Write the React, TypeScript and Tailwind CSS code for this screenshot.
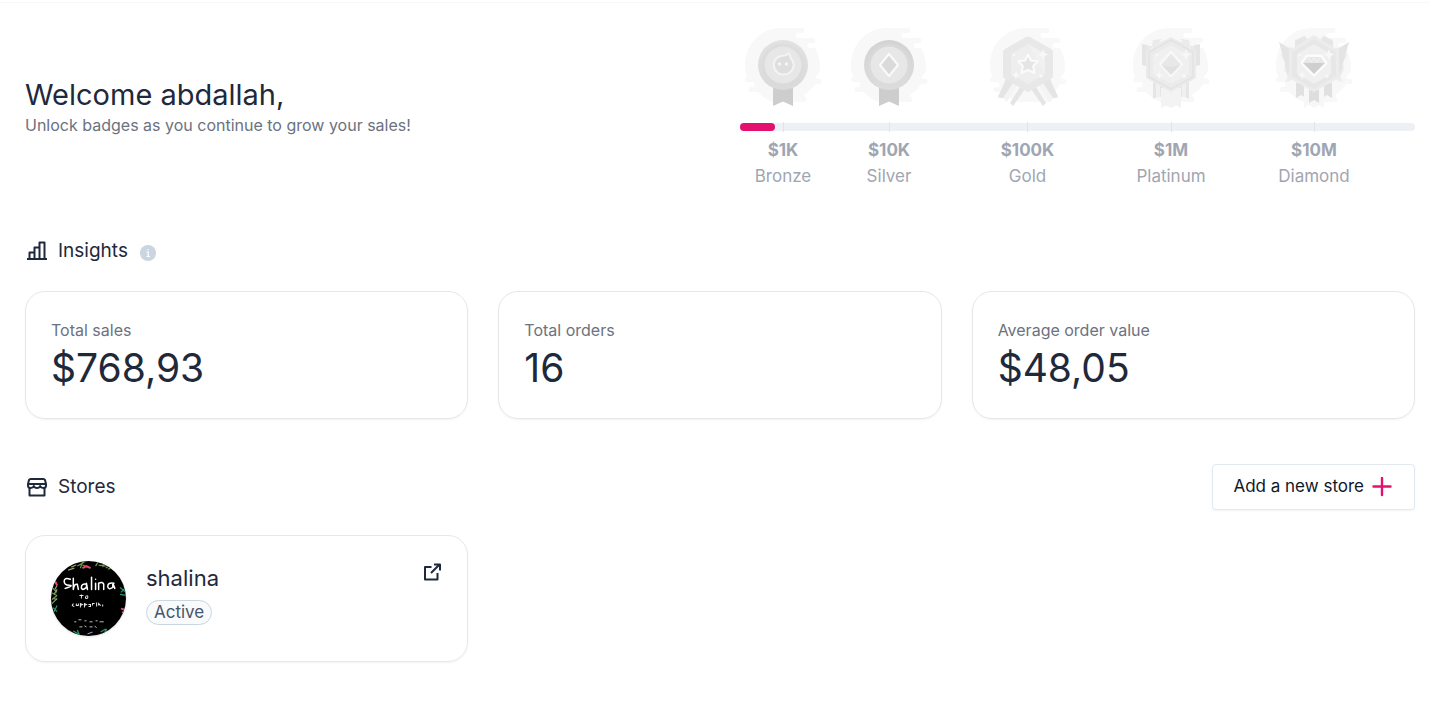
import type { ReactNode } from "react";

const levels = [
  { amount: "$1K", name: "Bronze" },
  { amount: "$10K", name: "Silver" },
  { amount: "$100K", name: "Gold" },
  { amount: "$1M", name: "Platinum" },
  { amount: "$10M", name: "Diamond" },
];

const stats = [
  { label: "Total sales", value: "$768,93" },
  { label: "Total orders", value: "16" },
  { label: "Average order value", value: "$48,05" },
];

const progress = 35 / 675;

// icons, bar ticks and labels share the same columns
const levelGrid = "grid grid-cols-[86fr_126fr_151fr_136fr_150fr_26fr]";

function BadgeFrame({ children }: { children: ReactNode }) {
  return (
    <svg viewBox="0 0 80 84" className="w-20 h-[84px]" aria-hidden="true">
      <path
        fill="#f8f8f8"
        d="M38 2H59a2.5 2.5 0 0 1 0 5H55a2.5 2.5 0 0 0 0 5H70a2.5 2.5 0 0 1 0 5H67a2.5 2.5 0 0 0 0 5H72Q77 31 77 42Q77 47 74 49a2.5 2.5 0 0 0 0 4H76a2.5 2.5 0 0 1 0 5H72Q69 64 62 68a2 2 0 0 0 0 3H61a2.5 2.5 0 0 1 0 5H30Q21 73 15 66H8a2.5 2.5 0 0 1 0-5H9a2.5 2.5 0 0 0 0-5H4.500a2.5 2.5 0 0 1 0-5Q2 47 2 39C2 18 18 2 38 2Z"
      />
      {children}
    </svg>
  );
}

function Sparkles() {
  return (
    <g fill="#f8f8f8">
      <path d="M55 23l1.5 4 4 1.5-4 1.5L55 34l-1.5-4-4-1.5 4-1.5Z" />
      <path d="M28 45l1.2 3 3 1.2-3 1.2L28 54l-1.2-3.4-3-1.2 3-1.2Z" />
      <circle cx="53" cy="50" r="1.8" />
      <circle cx="26" cy="29" r="1.2" />
    </g>
  );
}

function RoundMedal({ id, from, to }: { id: string; from: string; to: string }) {
  return (
    <>
      <defs>
        <linearGradient id={id} x1="0" y1="0" x2="0" y2="1">
          <stop offset="0" stopColor={from} />
          <stop offset="1" stopColor={to} />
        </linearGradient>
      </defs>
      <path d="M30 58H50V80L40 75.5L30 80Z" fill="#cdcdcd" />
      <circle cx="40" cy="39" r="25" fill={`url(#${id})`} />
      <circle cx="40" cy="39" r="21.500" fill={to} opacity=".5" />
      <circle cx="40" cy="39" r="18.5" fill="#e7e7e7" />
    </>
  );
}

function BronzeBadge() {
  return (
    <BadgeFrame>
      <RoundMedal id="bronze" from="#e2e2e2" to="#dadada" />
      <path
        d="M45.5 27c-1.8 3-4.5 2.8-8 3a10 9.500 0 1 0 10.500 2.500c-1-1.500-.5-3.500-2.500-5.500Z"
        fill="#dedede"
        stroke="#f3f3f3"
        strokeWidth="2"
        strokeLinejoin="round"
      />
      <circle cx="36.5" cy="38" r="1.7" fill="#f5f5f5" />
      <circle cx="43.5" cy="38" r="1.7" fill="#f5f5f5" />
    </BadgeFrame>
  );
}

function SilverBadge() {
  return (
    <BadgeFrame>
      <RoundMedal id="silver" from="#d3d3d3" to="#dcdcdc" />
      <path d="M40 28L49 39L40 50L31 39Z" fill="#dadada" stroke="#fafafa" strokeWidth="2" strokeLinejoin="round" />
    </BadgeFrame>
  );
}

function GoldBadge() {
  return (
    <BadgeFrame>
      <path d="M19 53L9 71L15 72L19 76L29 60ZM61 53L71 71L65 72L61 76L51 60Z" fill="#f4f4f4" />
      <path
        d="M18 53L10.500 70Q10 72 12 72H15L25 57ZM32 61L22 77L25 80L37 63ZM62 53L69.500 70Q70 72 68 72H65L55 57ZM48 61L58 77L55 80L43 63Z"
        fill="#e5e5e5"
      />
      <path d="M38 11Q40 10 42 11L63 23Q65 24 65 26V50Q65 52 63 53L42 65Q40 67 38 65L17 53Q15 52 15 50V26Q15 24 17 23Z" fill="#e8e8e8" />
      <path d="M40 18L57 28V48L40 58L23 48V28Z" fill="#eeeeee" />
      <path d="M40 18L57 28V48Z" fill="#f1f1f1" />
      <path
        d="M40 28.5L43 34.5L49.8 35.3L45.2 40L46.5 47L40 44L33.5 47L34.8 40L30.2 35.3L37 34.5Z"
        fill="#e5e5e5"
        stroke="#fbfbfb"
        strokeWidth="2"
        strokeLinejoin="round"
      />
      <Sparkles />
    </BadgeFrame>
  );
}

function PlatinumBadge() {
  return (
    <BadgeFrame>
      <path d="M22 56H32V72L27 70L22 73ZM48 56H58V73L53 70L48 72Z" fill="#e6e6e6" />
      <path d="M25 56H29V71L27 70H25ZM51 56H55V70L53 71H51Z" fill="#f0f0f0" />
      <path d="M30 62H50V82L45 79.5L40 82L35 79.5L30 82Z" fill="#f3f3f3" />
      <path d="M11 18L17 19L19 41L11 39ZM69 18L63 19L61 41L69 39Z" fill="#e5e5e5" />
      <path d="M22 14L31 13L20 22V40H16V20H21ZM58 14L49 13L60 22V40H64V20H59Z" fill="#e9e9e9" />
      <path d="M22 14L30 16L40 11L50 16L58 14V22L65 25V52L40 66L15 52V25L22 22Z" fill="#ebebeb" />
      <path d="M40 14L62 26V51L40 63L18 51V26Z" fill="#ebebeb" stroke="#e3e3e3" strokeWidth="1.5" />
      <path d="M40 19L58 29V48L40 58L22 48V29Z" fill="#f0f0f0" />
      <path d="M40 26L51 38L40 50L29 38Z" fill="#ececec" stroke="#f9f9f9" strokeWidth="2" strokeLinejoin="round" />
      <path d="M40 28L49.5 39L40 41L30.5 39Z" fill="#e8e8e8" />
      <path d="M40 41L49.5 39L40 49L30.5 39Z" fill="#e1e1e1" />
      <Sparkles />
    </BadgeFrame>
  );
}

function DiamondBadge() {
  return (
    <BadgeFrame>
      <path d="M22 57H32V72L27 69L22 72ZM48 57H58V72L53 69L48 72Z" fill="#e0e0e0" />
      <path d="M30 60H50V82L45 79L40 82L35 79L30 82Z" fill="#f7f7f7" />
      <path d="M35 64H45V77L40 74L35 77Z" fill="#dedede" />
      <path d="M5 16Q12 21 19 22L20 50L16 55L11 56L14 50L10 44L11 36L7 30L9 24ZM75 16Q68 21 61 22L60 50L64 55L69 56L66 50L70 44L69 36L73 30L71 24Z" fill="#eeeeee" />
      <path d="M5 16L17 24L14 51L11 37ZM75 16L63 24L66 51L69 37Z" fill="#e4e4e4" />
      <path d="M21 14L30 10L34 13L40 9L46 13L50 10L59 14V21L65 24V52L40 66L15 52V24L21 21Z" fill="#ececec" />
      <path d="M21 15L31 10L32 14L21 21ZM59 15L49 10L48 14L59 21Z" fill="#e6e6e6" />
      <path d="M40 13L62 26V50L40 63L18 50V26Z" fill="#e7e7e7" />
      <path d="M40 18L57 28V48L40 58L23 48V28Z" fill="#f0f0f0" />
      <path d="M33 30H47L52 37L40 49L28 37Z" fill="#dcdcdc" stroke="#fcfcfc" strokeWidth="3" strokeLinejoin="round" />
      <path d="M33.5 31H46.5L51 37H29Z" fill="#e8e8e8" />
      <path d="M29 37H51L40 48Z" fill="#cfcfcf" />
      <path d="M34 32L37 36L40 32L43 36L46 32" fill="none" stroke="#f4f4f4" />
      <Sparkles />
    </BadgeFrame>
  );
}

function ChartIcon() {
  return (
    <svg viewBox="0 0 24 24" className="w-6 h-6" fill="none" stroke="currentColor" strokeWidth="2" aria-hidden="true">
      <path d="M2 20H22M4.500 20V13.500H9.500M9.500 20V8.500H14.500M14.500 20V3.500H19.500V20" strokeLinejoin="round" />
    </svg>
  );
}

function StoreIcon() {
  return (
    <svg viewBox="0 0 24 24" className="w-6 h-6" fill="none" stroke="currentColor" strokeWidth="2" strokeLinejoin="round" aria-hidden="true">
      <path d="M5.500 4H18.500Q19.500 4 20 5L21 9V10.500Q21 13 18.300 13Q16 13 15.200 11Q14.500 13 12 13Q9.500 13 8.800 11Q8 13 5.700 13Q3 13 3 10.500V9L4 5Q4.500 4 5.500 4Z" />
      <path d="M3 9H21M4.500 13V20.500H19.500V13" />
    </svg>
  );
}

function OpenIcon() {
  return (
    <svg viewBox="0 0 20 20" className="w-5 h-5" fill="none" stroke="currentColor" strokeWidth="2" aria-hidden="true">
      <path d="M9.500 6H3V18.500H15.500V12M9 12L17.500 3.500M12 3.500H18V9.500" strokeLinejoin="round" />
    </svg>
  );
}

function StoreLogo() {
  return (
    <svg viewBox="0 0 74 74" className="w-[75px] h-[75px] rounded-full shadow-sm" role="img" aria-label="shalina logo">
      <rect width="74" height="74" />
      <g fill="none" strokeWidth="1.2">
        <path stroke="#6f9b58" d="M26 5l7-4M29 7l2-6M31 4l5 2M44 5l3-5M47 4l7 1M51 6l1-5M54 7l5-3M56 8l4-1M1 26l5 5M0 31l6 3M1 38l5-4M1 42l5-5" />
        <path stroke="#93a36a" d="M20 6l5-2M17 9l6-2M4 28l2-4M3 33l3-5M2 37l4 1" />
        <path stroke="#2a9a72" d="M2 46l4 4M3 50l3-6M68 26l5 4M69 31l4-4M68 33l6 1M22 69l5 3M26 68l2 5M49 70l5-3M52 72l3-5" />
        <path stroke="#e5486d" strokeWidth="2" d="M31 7l4-2 4 2M4 20l2 4M69 47l4 1" />
        <path stroke="#a88cc4" d="M36 72l5-2M70 50l3 2" />
      </g>
      <g fill="none" stroke="#fff" strokeWidth="1.5" strokeLinecap="round" strokeLinejoin="round">
        <path d="M19 18q-6-2-6 2t5 4-4 3M22 17v11q1-6 4-5l1 5M35 23q-5-1-5 3t5 0v-4l1 6M40 16v12M44 22v6M44 18v.1M47 28v-6q4-2 5 1v5M62 22q-6-1-6 3t5 1v-4l2 5" />
      </g>
      <g fill="none" stroke="#e8e8e8">
        <path d="M30 33v4M28 34h4M35 34q-2 3 0 3t1-3M22 42l-1 2 2 1M25 42v2h2v-2M29 46v-4l2 1-2 1M33 46v-4l2 1-2 1M37 43h2v2h-2M41 44v-2h2M45 41v4M47 44v-2l2 2M51 43v2" />
        <path strokeWidth=".8" d="M23 60h2M27 58h3M33 59h2M38 60h3M44 59h2M48 60h4M28 65h3M33 64l2 1M38 65h3M43 64l2 2" />
      </g>
    </svg>
  );
}

export default function App() {
  return (
    <main className="min-h-screen bg-white pt-0.5 text-[#1e293b] font-['Inter',sans-serif]">
      <div className="border-t border-[#f8f8f8] pl-[25px] pr-[15px] pt-[21px] pb-12">
        <header className="grid grid-cols-2 items-center gap-10">
          <div>
            <h1 className="text-[29px] leading-9">Welcome abdallah,</h1>
            <p className="text-base leading-6 text-[#6b7280]">Unlock badges as you continue to grow your sales!</p>
          </div>
          <div>
            <div className={`${levelGrid} justify-items-center pt-0.5`}>
              <BronzeBadge />
              <SilverBadge />
              <GoldBadge />
              <PlatinumBadge />
              <DiamondBadge />
            </div>
            <div className="relative mt-[13px] h-2 rounded-full bg-[#edf0f5]">
              <div className={`${levelGrid} h-2 items-center justify-items-center`}>
                {levels.map((level) => (
                  <span key={level.name} className="-my-px h-2.5 w-px bg-[#dfe4ea]" />
                ))}
              </div>
              <div className="absolute inset-y-0 left-0 rounded-full bg-[#e3106e]" style={{ width: `${progress * 100}%` }} />
            </div>
            <div className={`${levelGrid} mt-1.5 text-center text-[17px] leading-[26px] text-[#9fa6b2]`}>
              {levels.map((level) => (
                <div key={level.name}>
                  <p className="font-bold">{level.amount}</p>
                  <p>{level.name}</p>
                </div>
              ))}
            </div>
          </div>
        </header>

        <section className="mt-[47px]">
          <div className="flex h-[30px] items-center">
            <ChartIcon />
            <h2 className="ml-[9px] text-[19px]">Insights</h2>
            <button type="button" aria-label="About insights" className="ml-3 mt-1">
              <svg viewBox="0 0 16 16" className="w-4 h-4" aria-hidden="true">
                <circle cx="8" cy="8" r="8" fill="#cbd5e1" />
                <path d="M6.500 7H8.200V11.500M6.500 11.500H10M8 4V5.200" fill="none" stroke="#fff" strokeWidth="1.2" />
              </svg>
            </button>
          </div>
          <div className="mt-[25px] grid grid-cols-3 gap-[30px]">
            {stats.map((stat) => (
              <div key={stat.label} className="rounded-[20px] border border-gray-200 p-[25px] shadow-xs">
                <p className="text-base leading-[26px] text-[#6b7280]">{stat.label}</p>
                <p className="text-[39px] leading-[50px]">{stat.value}</p>
              </div>
            ))}
          </div>
        </section>

        <section className="mt-[45px]">
          <div className="flex items-center justify-between">
            <div className="flex items-center">
              <StoreIcon />
              <h2 className="ml-[9px] text-[19px]">Stores</h2>
            </div>
            <button type="button" className="flex h-[46px] items-center gap-2 rounded border border-slate-200 pl-5 pr-[22px] text-[17px] text-[#0f172a] shadow-xs">
              Add a new store
              <svg viewBox="0 0 20 20" className="w-5 h-5" stroke="#e3106e" strokeWidth="2.4" strokeLinecap="round" aria-hidden="true">
                <path d="M1.500 9.500H18.500M10 1V18" />
              </svg>
            </button>
          </div>
          <div className="mt-[25px] grid grid-cols-3 gap-[30px]">
            <article className="flex items-start rounded-[20px] border border-slate-200 p-[25px] shadow-xs">
              <StoreLogo />
              <div className="ml-5 pt-0.5">
                <h3 className="text-[22px] leading-[30px]">shalina</h3>
                <span className="mt-[7px] flex h-[25px] w-fit items-center rounded-full border border-slate-300 bg-slate-50 px-[7px] text-[17px] text-slate-600">
                  Active
                </span>
              </div>
              <a href="#" aria-label="Open shalina" className="ml-auto">
                <OpenIcon />
              </a>
            </article>
          </div>
        </section>
      </div>
    </main>
  );
}
